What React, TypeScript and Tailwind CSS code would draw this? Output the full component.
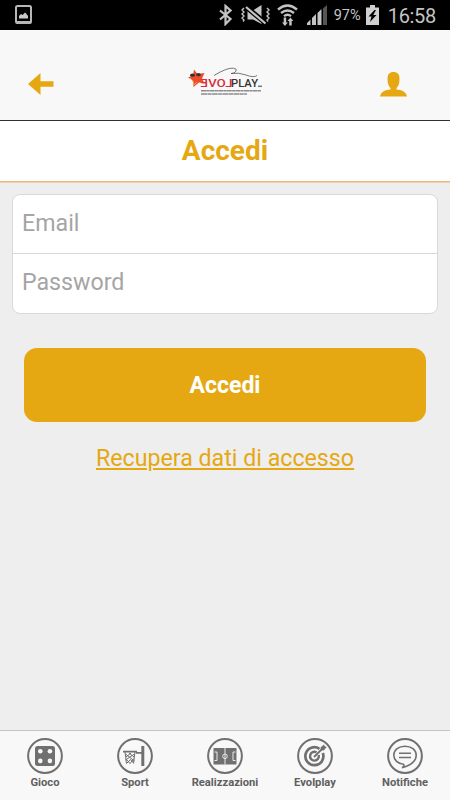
import type { ReactNode } from 'react';

function StatusBar() {
	return (
		<div className="flex h-[30px] shrink-0 items-center bg-black pr-[14px] pl-[15px] text-[#c4c4c4]">
			<svg width="17" height="20" viewBox="0 0 17 20" className="mr-auto">
				<rect x="1" y="1" width="15" height="17" rx="1.5" fill="none" stroke="#b9b6b9" strokeWidth="2" />
				<path d="M1 16h15v1.5a1.5 1.5 0 0 1-1.5 1.5h-12A1.5 1.5 0 0 1 1 17.500z" fill="#b9b6b9" />
				<path d="M4 13.500V11l2-2 1.500 1L10 7.500l1.500 1.500 1.500 2v2.500z" fill="#c9c9c9" />
			</svg>
			<svg width="13" height="22" viewBox="0 0 13 22" className="mr-[9px]">
				<path d="M1 6.500 11.500 15 6.500 20V2l5 4.500L1 15.500" fill="none" stroke="currentColor" strokeWidth="2.200" />
			</svg>
			<svg width="29" height="20" viewBox="0 0 29 20" className="mr-[7px]">
				<path d="M6.500 5.500H12L20.500 0v19L12 14.500H6.500z" fill="currentColor" />
				<path d="M4 1l21 17.500" stroke="#000" strokeWidth="5" />
				<path d="M5 2 24.500 18.500" stroke="currentColor" strokeWidth="2.200" />
				<path
					d="M3 3 1 5l2 2-2 2 2 2-2 2 2 2-1 1.500M26 3l2 2-2 2 2 2-2 2 2 2-2 2 1 1.500"
					fill="none"
					stroke="currentColor"
					strokeWidth="1.400"
				/>
			</svg>
			<svg width="21" height="22" viewBox="0 0 21 22" className="mr-[9px]">
				<path
					d="M1 5.500Q10.500-2.500 20 5.500M4 9q6.500-5 13 0M7 12.200q3.500-2.800 7 0"
					fill="none"
					stroke="currentColor"
					strokeWidth="2.300"
				/>
				<path d="M6.700 13.500v5H5L7.900 22l3-3.500H9.200v-5zM12.200 21.500v-4.500h-1.700l2.900-3.500 3 3.500h-1.700v4.500z" fill="currentColor" />
			</svg>
			<svg width="20" height="20" viewBox="0 0 20 20" className="mr-[7px]">
				<path d="M0 20v-2l3.500-3.500V20zM5 20v-7l4-4v11zM10.500 20V8L14.500 4v16z" fill="currentColor" />
				<path d="M16 20V3.500L20 0v20z" fill="#555" />
			</svg>
			<span className="mr-1 w-7 pt-[3px] text-[14.5px] leading-none">97%</span>
			<svg width="13" height="20" viewBox="0 0 13 20" className="mr-[9px]">
				<path d="M4 0h5v2.500h4V20H0V2.500h4z" fill="#d0d0d0" />
				<path d="m8.500 5-6 6.500h3L4 17l6.500-7H7.300l2.700-5z" fill="#000" />
			</svg>
			<span className="pt-px text-[20px] leading-none tracking-[-0.3px]">16:58</span>
		</div>
	);
}

function Logo() {
	return (
		<svg width="76" height="30" viewBox="0 0 76 30" fontFamily="Roboto, sans-serif">
			<path d="M7 2.500 10.500 7l7-1-2.500 5.500 2.500 5-5.500-1-5.500 4.500-.5-6.500L1 10.500l5-2z" fill="#ee4b2b" />
			<path d="M3 11l3 3 1 4 3-3" stroke="#f5a04a" strokeWidth="1" fill="none" />
			<ellipse cx="5.500" cy="8.200" rx="2.500" ry="1.600" fill="#333" />
			<ellipse cx="11.500" cy="7.700" rx="2.300" ry="1.600" fill="#333" />
			<path
				d="M27 8.500Q40 .5 46.500 1.200q4 .6 2.500 3-1.500 2.300-5 2.300 8-1.200 15 1.500 8 3 11 .5"
				fill="none"
				stroke="#555"
				strokeWidth="0.800"
			/>
			<text
				transform="translate(45.500 20.300) scale(-1 1)"
				fontSize="11.5"
				fontWeight="500"
				fill="#d8303a"
				textLength="32"
				lengthAdjust="spacingAndGlyphs"
			>
				LOVE
			</text>
			<text x="44" y="20.300" fontSize="11.5" fontWeight="500" fill="#333" textLength="27" lengthAdjust="spacingAndGlyphs">
				PLAY
			</text>
			<path d="M71 19.300h4" stroke="#777" strokeWidth="1.500" />
			<path d="M14 23.700h60" stroke="#8c8c8c" strokeWidth="1.600" strokeDasharray="5 .3 3 .3" />
			<path d="M14 27h46" stroke="#8c8c8c" strokeWidth="1.500" strokeDasharray="6 .4 4 .4" />
		</svg>
	);
}

function Header() {
	return (
		<header className="flex h-[91px] shrink-0 items-center justify-between border-b border-[#303030] bg-[#f8f8f8] pt-[18px] pr-[43px] pl-7">
			<svg width="26" height="22" viewBox="0 0 26 22" fill="#e5a812">
				<path d="M0 11 12.500 0v8.300h13v5.400h-13V22z" />
			</svg>
			<div className="-mt-1 ml-[16px]">
				<Logo />
			</div>
			<svg width="27" height="25" viewBox="0 0 27 25" fill="#e5a812">
				<path d="M7.500 7C7.500 2 9.500 0 13.500 0s6 2 6 7c0 4-1 7.500-3 9v1.500c5 .5 9.500 2 10.500 7H0c1-5 5.500-6.500 10.500-7V16c-2-1.500-3-5-3-9z" />
			</svg>
		</header>
	);
}

function Dice() {
	return (
		<>
			<rect x="8" y="8" width="20" height="20" rx="2.500" fill="#707070" />
			<g fill="#f8f8f8">
				<circle cx="13.300" cy="13.300" r="2.300" />
				<circle cx="22.900" cy="13.300" r="2.300" />
				<circle cx="13.300" cy="22.900" r="2.300" />
				<circle cx="22.900" cy="22.900" r="2.300" />
			</g>
		</>
	);
}

function Basket() {
	return (
		<g fill="none" stroke="#707070">
			<path d="M25.800 8v20" strokeWidth="3" />
			<path d="M6 13.700h14M19 14.800h6" strokeWidth="1.800" />
			<path
				d="M8 14l1.500 11.500M18 14l-1.500 11.500M8.500 16l9 7M17.500 16l-9 6M12 15l5 4M14 15l-5 4M9.500 25.500l4-4 3 3.500M9 21l4 4.500 4-5"
				strokeWidth="1"
			/>
		</g>
	);
}

function Pitch() {
	return (
		<>
			<path d="M6.500 10h23v16.500h-23z" fill="#707070" />
			<g fill="none" stroke="#e8e8e8" strokeWidth="1">
				<path d="M18 10v16.500M7.500 14H10v8.500H7.500M28.500 14H26v8.500h2.500" />
				<circle cx="18" cy="18.300" r="2.300" />
			</g>
		</>
	);
}

function Target() {
	return (
		<g fill="none" stroke="#707070">
			<path d="M22.500 10.800A9 9 0 1 0 25.800 15" strokeWidth="2.700" />
			<path d="M19.500 14.300A4.400 4.400 0 1 0 21.700 17" strokeWidth="2.400" />
			<path d="m17 19 9-9" strokeWidth="1.800" />
			<path d="m23.500 9.500 3.500-3 .7 1.800 2 .7-3 3.500-2.700-.3z" fill="#707070" stroke="none" />
		</g>
	);
}

function Bubble() {
	return (
		<g fill="none" stroke="#707070" strokeWidth="1.600">
			<path d="M16.500 26.300C11 26 6.800 22 6.800 17.300c0-5.500 5-9 11.200-9s11.200 3.500 11.200 9c0 5.500-5.500 10-14.200 12.500q3-1.500 1.500-3.500z" />
			<path d="M12 15.300h12M12 19.500h12" />
		</g>
	);
}

const tabs: { label: string; icon: ReactNode }[] = [
	{ label: 'Gioco', icon: <Dice /> },
	{ label: 'Sport', icon: <Basket /> },
	{ label: 'Realizzazioni', icon: <Pitch /> },
	{ label: 'Evolplay', icon: <Target /> },
	{ label: 'Notifiche', icon: <Bubble /> },
];

export default function App() {
	return (
		<div className="flex h-[800px] w-[450px] flex-col bg-[#eeeeee] font-['Roboto',sans-serif]">
			<StatusBar />
			<Header />
			<h1 className="flex h-[61px] shrink-0 items-center justify-center border-b border-b-[#eeb478] bg-white text-[28px] font-bold text-[#e5a812] shadow-[0_1px_0_#efd3b4]">
				Accedi
			</h1>

			<main className="flex flex-1 flex-col px-3 pt-3">
				<div className="flex flex-col overflow-hidden rounded-[8px] border border-[#d9d9d9] bg-white">
					<input
						type="email"
						placeholder="Email"
						className="h-[59px] border-b border-[#d9d9d9] px-[9px] pb-[2px] text-[23.2px] outline-none placeholder:text-[#a5a5a5]"
					/>
					<input
						type="password"
						placeholder="Password"
						className="h-[58.5px] px-[9px] pb-[2px] text-[23.2px] outline-none placeholder:text-[#a5a5a5]"
					/>
				</div>
				<button className="mx-3 mt-[34px] h-[74.500px] rounded-[13px] bg-[#e5a812] pt-0.5 text-[23px] font-bold text-white">
					Accedi
				</button>
				<a href="#" className="mt-[19px] self-center text-[23.2px] text-[#e5a812] underline">
					Recupera dati di accesso
				</a>
			</main>

			<nav className="flex h-[70px] shrink-0 border-t border-[#c4c4c4] bg-[#f8f8f8] pt-[7px]">
				{tabs.map(tab => (
					<a key={tab.label} href="#" className="flex flex-1 flex-col items-center">
						<svg width="36" height="36" viewBox="0 0 36 36">
							<circle cx="18" cy="18" r="16.900" fill="none" stroke="#707070" strokeWidth="2" />
							{tab.icon}
						</svg>
						<span className="pt-px text-[11.2px] leading-4 font-bold text-[#606060]">{tab.label}</span>
					</a>
				))}
			</nav>
		</div>
	);
}
